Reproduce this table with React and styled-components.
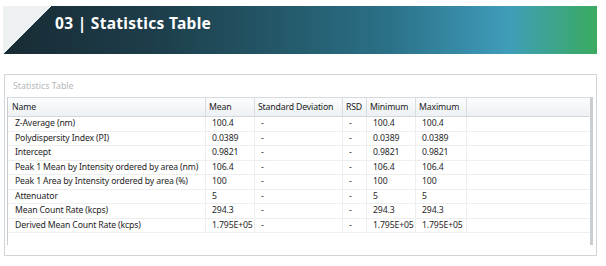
import React from "react";
import styled, { createGlobalStyle } from "styled-components";

const Global = createGlobalStyle`
  html, body { margin: 0; padding: 0; background: #ffffff; }
  body { width: 606px; height: 266px; overflow: hidden; font-family: "Noto Sans", "Open Sans", sans-serif; }
`;

const Page = styled.div`
  display: flex;
  flex-direction: column;
  padding: 6px 9px 0 3px;
`;

const Banner = styled.div`
  height: 48px;
  display: flex;
  align-items: flex-start;
  padding: 6px 0 0 52px;
  box-sizing: border-box;
  background:
    linear-gradient(to bottom right, #eef1f1 50%, transparent 50%) top left / 49px 48px no-repeat,
    linear-gradient(90deg, #182b34 0%, #1d3d4a 25%, #235666 45%, #2b7188 65%, #3a91ae 80%, #3f9db9 85%, #3ca58a 93%, #3aab60 100%);
`;

const BannerTitle = styled.h2`
  margin: 0;
  font-family: "Noto Sans", "Open Sans", sans-serif;
  font-weight: 700;
  font-size: 15.5px;
  line-height: 22px;
  color: #ffffff;
  letter-spacing: 0.3px;
`;

const Panel = styled.section`
  margin: 20px 0 0 1px;
  border: 1px solid #cfd5d9;
  display: flex;
  flex-direction: column;
  padding: 0 3px 10px 2px;
  height: 182px;
  box-sizing: border-box;
`;

const PanelTitle = styled.div`
  height: 22px;
  display: flex;
  align-items: center;
  padding-left: 6px;
  font-size: 8.8px;
  color: #b4b8bb;
`;

const TableFrame = styled.div`
  flex: 1;
  border-left: 1px solid #c9ced2;
  border-right: 3px solid #c9ced2;
  border-top: 1px solid #d6dadd;
  display: grid;
  grid-template-columns: 198px 49px 88px 24px 49px 51px 1fr;
  grid-auto-rows: 14.5px;
  grid-template-rows: 19px;
  align-content: start;
  font-size: 8.7px;
  letter-spacing: -0.15px;
  color: #262626;
`;

const HeadCell = styled.div`
  display: flex;
  align-items: center;
  padding-left: ${(p) => (p.$first ? 4 : 3)}px;
  background: linear-gradient(#fbfcfd, #eef1f4);
  border-right: 1px solid ${(p) => (p.$last ? "transparent" : "#d9dde0")};
  border-bottom: 1px solid #d3d7da;
  white-space: nowrap;
  overflow: hidden;
  color: #1c1c1c;
`;

const Cell = styled.div`
  display: flex;
  align-items: center;
  padding-left: ${(p) => (p.$first ? 7 : 6)}px;
  border-right: 1px solid ${(p) => (p.$last ? "transparent" : "#eeeeee")};
  border-bottom: 1px solid #eeeeee;
  white-space: nowrap;
  overflow: hidden;
  line-height: 1;
`;

const headers = ["Name", "Mean", "Standard Deviation", "RSD", "Minimum", "Maximum", ""];

const rows = [
  ["Z-Average (nm)", "100.4", "-", "-", "100.4", "100.4"],
  ["Polydispersity Index (PI)", "0.0389", "-", "-", "0.0389", "0.0389"],
  ["Intercept", "0.9821", "-", "-", "0.9821", "0.9821"],
  ["Peak 1 Mean by Intensity ordered by area (nm)", "106.4", "-", "-", "106.4", "106.4"],
  ["Peak 1 Area by Intensity ordered by area (%)", "100", "-", "-", "100", "100"],
  ["Attenuator", "5", "-", "-", "5", "5"],
  ["Mean Count Rate (kcps)", "294.3", "-", "-", "294.3", "294.3"],
  ["Derived Mean Count Rate (kcps)", "1.795E+05", "-", "-", "1.795E+05", "1.795E+05"],
];

export default function App() {
  return (
    <>
      <Global />
      <Page>
        <Banner>
          <BannerTitle>03 | Statistics Table</BannerTitle>
        </Banner>
        <Panel>
          <PanelTitle>Statistics Table</PanelTitle>
          <TableFrame>
            {headers.map((h, i) => (
              <HeadCell key={"h" + i} $first={i === 0} $last={i === headers.length - 1}>
                {h}
              </HeadCell>
            ))}
            {rows.map((r, ri) =>
              [...r, ""].map((c, ci) => (
                <Cell key={ri + "-" + ci} $first={ci === 0} $last={ci === 6}>
                  {c}
                </Cell>
              ))
            )}
          </TableFrame>
        </Panel>
      </Page>
    </>
  );
}
